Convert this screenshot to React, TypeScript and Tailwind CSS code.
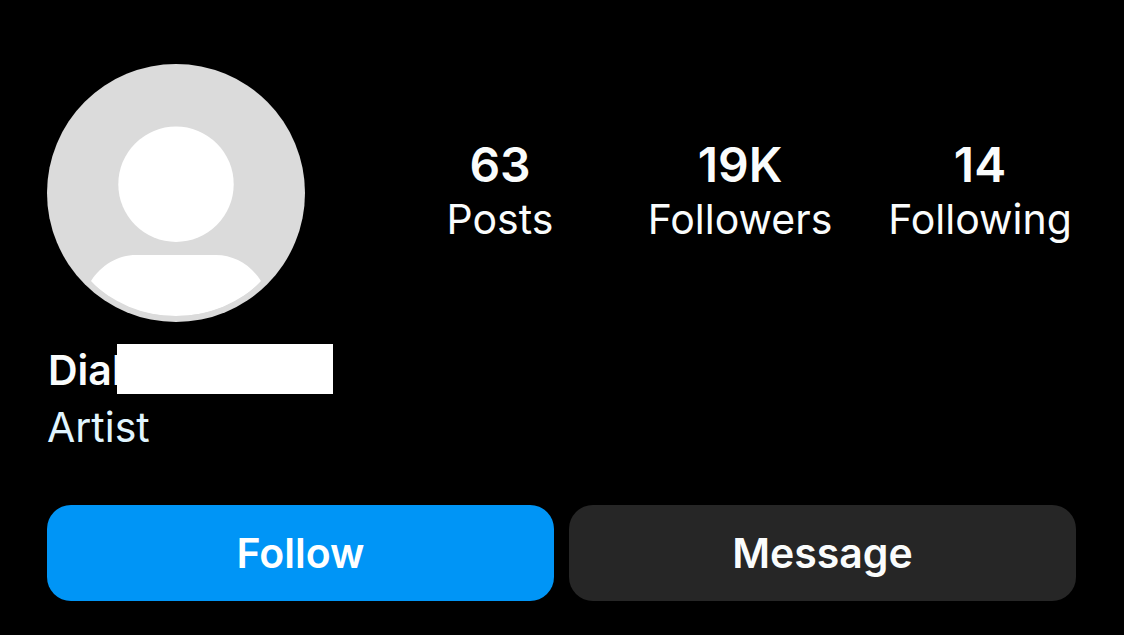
type Stat = { value: string; label: string }

const stats: Stat[] = [
  { value: "63", label: "Posts" },
  { value: "19K", label: "Followers" },
  { value: "14", label: "Following" },
]

function Avatar() {
  return (
    <svg className="w-[258px] h-[258px] shrink-0" viewBox="0 0 258 258">
      <defs>
        <clipPath id="avatar-inner">
          <circle cx="129" cy="129" r="123" />
        </clipPath>
      </defs>
      <circle cx="129" cy="129" r="129" fill="#dbdbdb" />
      <circle cx="129" cy="120.2" r="57.7" fill="#fff" />
      <path
        d="M44 217C54 201 71 191 89 191H169C187 191 204 201 214 217C193 240 163 252 129 252C94 252 65 240 44 217Z"
        fill="#fff"
        clipPath="url(#avatar-inner)"
      />
    </svg>
  )
}

export default function App() {
  return (
    <div className="w-full h-[635px] bg-black text-[#fafcfc] font-['Inter',sans-serif] overflow-hidden pl-[47px] pr-12 pt-16">
      {/* Avatar and counters */}
      <header className="flex">
        <Avatar />
        <div className="flex ml-[75px] pt-[74px] -mr-12">
          {stats.map((stat) => (
            <div key={stat.label} className="w-[240px] shrink-0 flex flex-col items-center">
              <span className="text-[48px] leading-[54px] font-semibold">{stat.value}</span>
              <span className="text-[41px] leading-[54px]">{stat.label}</span>
            </div>
          ))}
        </div>
      </header>

      {/* Name and category, the end of the name sits under a white block */}
      <section className="mt-[22px] h-[161px]">
        <div className="flex h-[50px]">
          <h1 className="w-[70px] shrink-0 pl-px whitespace-nowrap text-[41px] leading-[53px] font-semibold">Dial</h1>
          <div className="relative w-[216px] h-[50px] bg-white" />
        </div>
        <p className="mt-[7px] text-[41px] leading-[52px] text-[#e0f5ff]">Artist</p>
      </section>

      {/* Actions */}
      <div className="flex gap-[15px] text-[41px] font-semibold">
        <button className="flex-1 h-24 pt-0.5 rounded-3xl bg-[#0095f6] text-white">Follow</button>
        <button className="flex-1 h-24 pt-0.5 rounded-3xl bg-[#262626]">Message</button>
      </div>
    </div>
  )
}
